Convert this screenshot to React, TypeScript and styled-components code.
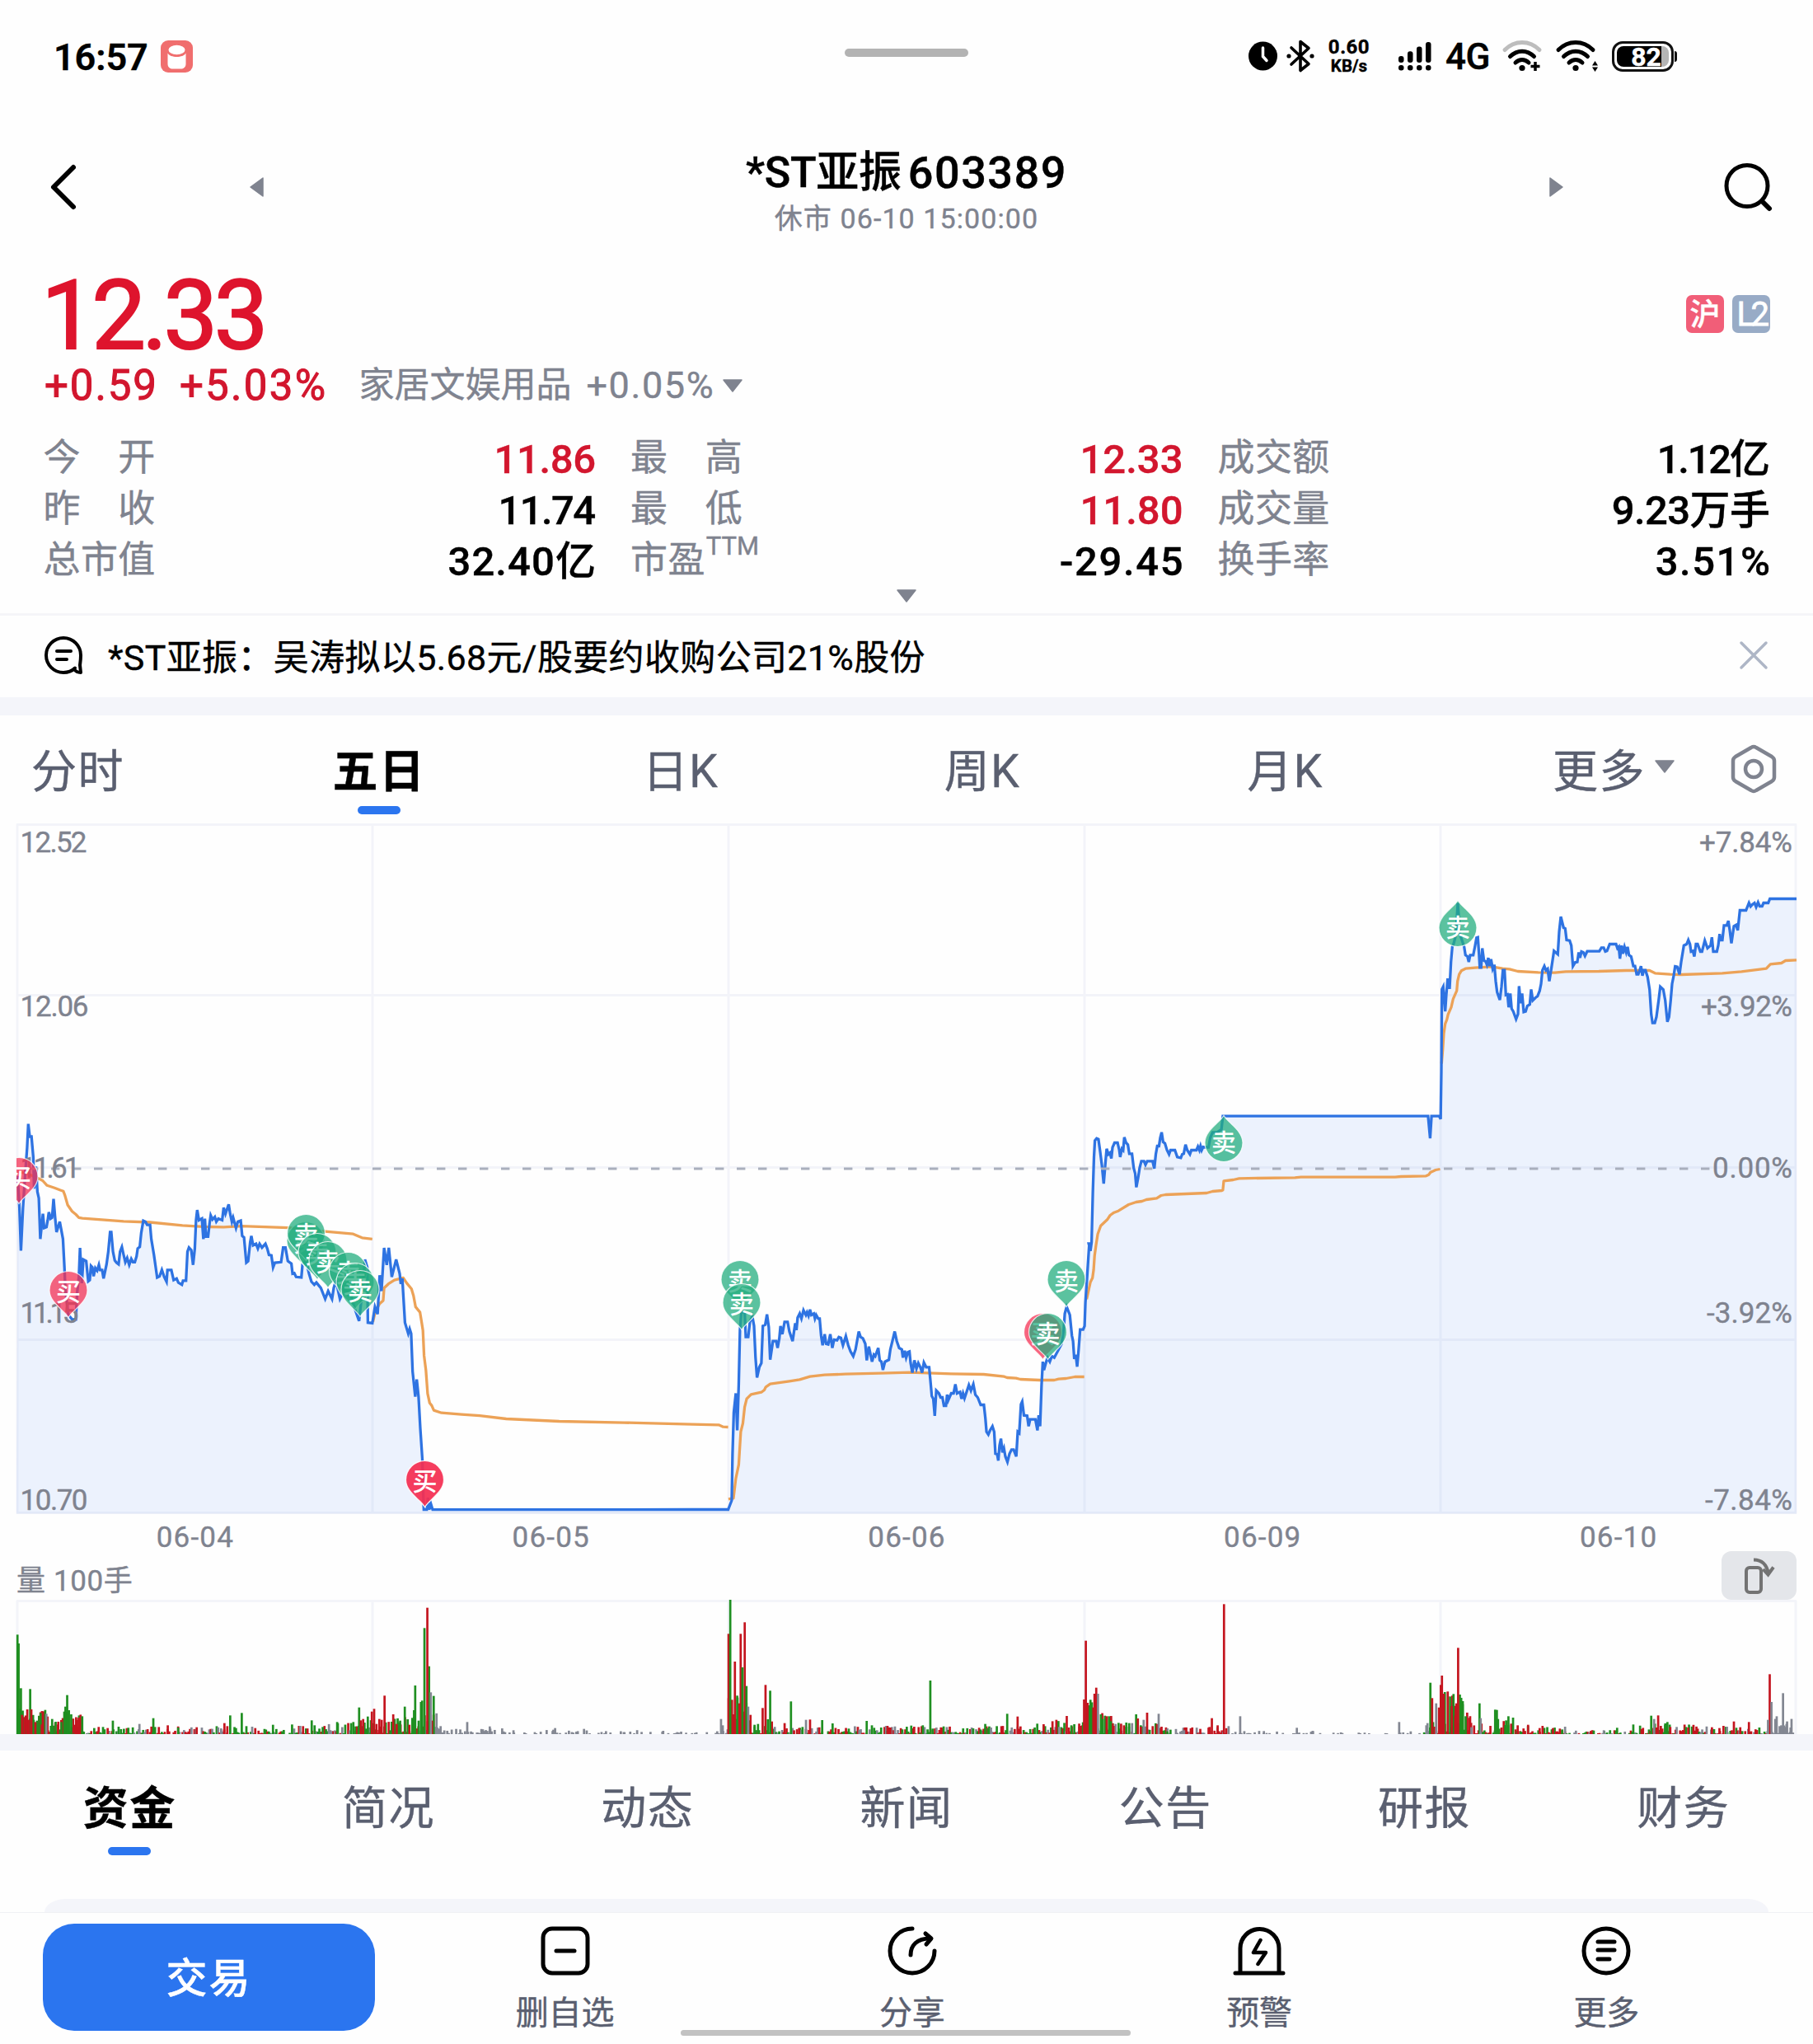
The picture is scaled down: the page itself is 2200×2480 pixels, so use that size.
import React from 'react';
import styled, { createGlobalStyle } from 'styled-components';

const RED = '#d2162e';
const GRAY = '#7f838f';
const SLATE = '#5a5f70';
const BLUE = '#2b75ef';
const BAND = '#f4f5fa';
const FONT = "Roboto, 'Noto Sans CJK SC', sans-serif";

const GlobalStyle = createGlobalStyle`
  html, body { margin: 0; padding: 0; background: #fff; }
  * { box-sizing: border-box; }
  svg { display: block; flex: none; overflow: visible; }
`;

const Page = styled.div`
  width: 2200px;
  height: 2480px;
  display: flex;
  flex-direction: column;
  background: #fefefe;
  color: #000;
  font-family: ${FONT};
  -webkit-text-stroke-width: 0.4px;
  overflow: hidden;
  & > * { flex-shrink: 0; }
`;

const Txt = styled.span<{ $size: number; $color?: string; $weight?: number; $ls?: number; $bolder?: number }>`
  font-size: ${p => p.$size}px;
  color: ${p => p.$color ?? '#000'};
  font-weight: ${p => p.$weight ?? 400};
  letter-spacing: ${p => p.$ls ?? 0}px;
  -webkit-text-stroke-width: ${p => p.$bolder ?? 0.4}px;
  line-height: 1;
  white-space: nowrap;
`;

/* ---------- status bar ---------- */

const StatusBar = styled.header`
  height: 136px;
  display: grid;
  grid-template-columns: 1fr 150px 1fr;
  align-items: center;
`;
const StatusLeft = styled.div`
  display: flex;
  align-items: center;
  gap: 15px;
  padding-left: 65px;
`;
const Clock = styled(Txt)`
  padding-top: 2px;
`;
const Handle = styled.div`
  height: 10px;
  border-radius: 5px;
  background: #b3b3b3;
  align-self: start;
  margin-top: 59px;
`;
const StatusRight = styled.div`
  display: flex;
  align-items: center;
  padding-left: 340px;
`;
const Speed = styled.div`
  width: 54px;
  margin: 0 32px 0 15px;
  display: flex;
  flex-direction: column;
  align-items: center;
  gap: 1px;
`;
const Network = styled.div`
  width: 56px;
  margin: 0 13px 0 16px;
  padding-top: 2px;
`;
const Battery = styled.div`
  position: relative;
  width: 75px;
  height: 37px;
  margin-left: 17px;
  padding: 3px;
  border: 3px solid #111;
  border-radius: 13px;
  &::after {
    content: '';
    position: absolute;
    right: -7px;
    top: 9px;
    width: 3px;
    height: 13px;
    border-radius: 0 3px 3px 0;
    background: #111;
  }
`;
const BatteryLevel = styled.div`
  height: 100%;
  border-radius: 8px;
  display: flex;
  align-items: center;
  justify-content: center;
  padding: 2px 0 0 8px;
  background: linear-gradient(90deg, #000 85%, #b5b5b5 85%);
`;

/* ---------- title ---------- */

const TitleBar = styled.div`
  height: 182px;
  padding: 0 50px 0 60px;
  display: flex;
  align-items: center;
`;
const TitleCenter = styled.div`
  flex: 1;
  display: flex;
  flex-direction: column;
  align-items: center;
  gap: 11px;
  padding-top: 11px;
`;
const TitleLine = styled.div`
  display: flex;
  gap: 8px;
  align-items: center;
`;
const TitleSide = styled.div<{ $between: number }>`
  display: flex;
  align-items: center;
  gap: ${p => p.$between}px;
`;

/* ---------- quote ---------- */

const Quote = styled.section`
  height: 426px;
  display: flex;
  flex-direction: column;
  padding: 0 52px 0 54px;
`;
const PriceRow = styled.div`
  height: 126px;
  display: flex;
  align-items: center;
  justify-content: space-between;
`;
const Price = styled(Txt)`
  padding-top: 5px;
  margin-left: -4px;
`;
const Badges = styled.div`
  display: flex;
  gap: 10px;
`;
const Badge = styled.div<{ $bg: string }>`
  width: 46px;
  height: 46px;
  border-radius: 7px;
  display: flex;
  align-items: center;
  justify-content: center;
  padding-top: 2px;
  background: ${p => p.$bg};
`;
const ChangeRow = styled.div`
  height: 47px;
  display: flex;
  align-items: center;
`;
const Gap = styled.span<{ $w: number }>`
  width: ${p => p.$w}px;
  flex: none;
`;
const StatGrid = styled.div`
  margin: 34px 0 0 -1.5px;
  display: grid;
  grid-template-columns: repeat(3, 1fr);
  grid-auto-rows: 62px;
  column-gap: 42px;
`;
const Stat = styled.div`
  display: flex;
  align-items: center;
  justify-content: space-between;
`;
const Label = styled.span`
  font-size: 45px;
  line-height: 58px;
  letter-spacing: 0.4px;
  color: ${GRAY};
  white-space: nowrap;
`;
const Sup = styled.sup`
  font-size: 31px;
  line-height: 0;
  vertical-align: 22px;
  letter-spacing: 0;
  margin-left: 1px;
`;
const Value = styled.span<{ $up?: boolean; $ls?: number }>`
  font-size: 49px;
  line-height: 58px;
  padding-top: 3px;
  font-weight: 500;
  letter-spacing: ${p => p.$ls ?? 0}px;
  margin-right: ${p => -(p.$ls ?? 0)}px;
  color: ${p => (p.$up ? RED : '#000')};
  white-space: nowrap;
`;
const Expand = styled.div`
  flex: 1;
  display: flex;
  justify-content: center;
  padding: 4px 2px 0 0;
`;

/* ---------- news ---------- */

const News = styled.section`
  height: 102px;
  border-top: 3px solid #f5f5f8;
  padding: 0 54px 3px;
  display: flex;
  align-items: center;
`;
const NewsText = styled.span`
  flex: 1;
  margin-left: 31px;
  padding-top: 7px;
  font-size: 43px;
  line-height: 1;
  letter-spacing: 0.35px;
`;
const Band = styled.div<{ $h: number }>`
  height: ${p => p.$h}px;
  flex: none;
  background: ${BAND};
`;

/* ---------- period tabs ---------- */

const PeriodTabs = styled.nav`
  height: 130px;
  display: grid;
  grid-template-columns: 277px repeat(4, 366px) 1fr;
`;
const Tab = styled.div<{ $pad?: number; $left?: boolean }>`
  display: flex;
  flex-direction: column;
  align-items: ${p => (p.$left ? 'flex-start' : 'center')};
  padding-top: 38px;
  padding-left: ${p => p.$pad ?? 0}px;
`;
const MoreTab = styled.div`
  display: flex;
  align-items: flex-start;
  padding: 35px 0 0 143px;
  & > span:first-child { padding-top: 3px; }
`;
const MoreArrow = styled.div`
  margin: 19px 68px 0 11px;
`;
const TabText = styled.span<{ $on?: boolean }>`
  font-size: 55px;
  line-height: 60px;
  letter-spacing: 1.5px;
  font-weight: ${p => (p.$on ? 700 : 400)};
  color: ${p => (p.$on ? '#000' : SLATE)};
`;
const Underline = styled.i<{ $top: number }>`
  width: 52px;
  height: 10px;
  border-radius: 5px;
  margin-top: ${p => p.$top}px;
  background: ${BLUE};
`;

/* ---------- charts ---------- */

const Dates = styled.div`
  height: 56px;
  padding: 0 20px 1px 21px;
  display: grid;
  grid-template-columns: repeat(5, 1fr);
  justify-items: center;
  align-items: center;
`;
const VolumeHead = styled.div`
  height: 47px;
  padding: 0 20px;
  display: flex;
  justify-content: space-between;
  align-items: flex-end;
`;
const VolumeLabel = styled(Txt)`
  padding-bottom: 5px;
`;
const RotateButton = styled.div`
  width: 91px;
  height: 59px;
  border-radius: 12px;
  background: #e4e6ea;
  display: flex;
  align-items: center;
  justify-content: center;
`;

/* ---------- info tabs and footer ---------- */

const InfoTabs = styled.nav`
  height: 180px;
  display: grid;
  grid-template-columns: repeat(7, 1fr);
`;
const InfoTab = styled.div`
  display: flex;
  flex-direction: column;
  align-items: center;
  padding-top: 40px;
`;
const CardTop = styled.div`
  height: 16px;
  margin: 0 54px;
  border-radius: 26px 26px 0 0 / 16px 16px 0 0;
  background: ${BAND};
`;
const Footer = styled.footer`
  position: relative;
  height: 160px;
  border-top: 1px solid #f0f1f4;
  padding: 13px 40px 0 52px;
  display: flex;
`;
const TradeButton = styled.button`
  width: 403px;
  height: 130px;
  margin-right: 20px;
  padding: 4px 0 0;
  border: 0;
  border-radius: 38px;
  background: ${BLUE};
  color: #fff;
  font: 500 50px/126px ${FONT};
  letter-spacing: 2px;
`;
const Action = styled.div`
  flex: 1;
  display: flex;
  flex-direction: column;
  align-items: center;
  gap: 26px;
  padding-top: 3px;
`;
const HomeBar = styled.div`
  position: absolute;
  left: 826px;
  bottom: 10px;
  width: 546px;
  height: 7px;
  border-radius: 4px;
  background: #c2c2c2;
`;

/* ---------- icons ---------- */

const Tri = ({ dir, w = 24, h = 16 }: { dir: 'left' | 'right' | 'down'; w?: number; h?: number }) => {
  const pts =
    dir === 'down' ? `1,1 ${w - 1},1 ${w / 2},${h - 1}` :
    dir === 'left' ? `${w - 1},1 ${w - 1},${h - 1} 1,${h / 2}` : `1,1 1,${h - 1} ${w - 1},${h / 2}`;
  return (
    <svg width={w} height={h}>
      <polygon points={pts} fill={GRAY} stroke={GRAY} strokeWidth="1.5" strokeLinejoin="round" />
    </svg>
  );
};

const AppIcon = () => (
  <svg width="39" height="39" viewBox="0 0 39 39">
    <rect width="39" height="39" rx="9" fill="#f06e6e" />
    <ellipse cx="19.5" cy="11.5" rx="10" ry="5.8" fill="#fff" />
    <path d="M8.5 15.5c3 6 19 6 22 0v13c0 4-3 6-6 6h-10c-3 0-6-2-6-6z" fill="#fff" />
  </svg>
);

const ClockIcon = () => (
  <svg width="35" height="36" viewBox="0 0 35 36">
    <circle cx="17.5" cy="18" r="17.5" fill="#000" />
    <path d="M17.5 8v10.500l4.500 5" fill="none" stroke="#fff" strokeWidth="3.500" strokeLinecap="round" />
  </svg>
);

const BluetoothIcon = () => (
  <svg width="34" height="40" viewBox="0 0 34 40">
    <path d="M6 10l21 19.500-10 8V2.500l10 8L6 30" fill="none" stroke="#000" strokeWidth="3.600" strokeLinejoin="round" strokeLinecap="round" />
    <circle cx="3" cy="20" r="2.600" />
    <circle cx="31" cy="20" r="2.600" />
  </svg>
);

const SignalIcon = () => (
  <svg width="42" height="36" viewBox="0 0 42 36">
    {[0, 1, 2, 3].map(i => (
      <g key={i}>
        <rect x={1 + i * 11} y={18 - i * 5.7} width="6.500" height={8 + i * 5.7} rx="3" />
        <rect x={1 + i * 11} y="29" width="6.500" height="6.500" rx="3" />
      </g>
    ))}
  </svg>
);

const WifiIcon = ({ dim }: { dim?: boolean }) => (
  <svg width="51" height="38" viewBox="0 0 51 38">
    <g fill="none" strokeWidth="5" strokeLinecap="round">
      <path d="M3 11.500C15-.500 33-.500 45 11.500" stroke={dim ? '#bdbdbd' : '#000'} />
      <path d="M9.500 19.500C18 11 30 11 38.500 19.500" stroke="#000" />
      <path d="M16 27c5-4.600 11-4.600 16 0" stroke="#000" />
    </g>
    <circle cx="24" cy="33.500" r="3.600" />
    {dim ? (
      <path d="M40 26v11M34.500 31.500h11" stroke="#000" strokeWidth="3.500" />
    ) : (
      <path d="M47.500 25l3.500 5.500h-7zM47.500 38l3.500-5.500h-7z" />
    )}
  </svg>
);

const BackIcon = () => (
  <svg width="34" height="56" viewBox="0 0 34 56">
    <path d="M29 4L5 28l24 24" fill="none" stroke="#000" strokeWidth="6" strokeLinecap="round" strokeLinejoin="round" />
  </svg>
);

const SearchIcon = () => (
  <svg width="59" height="60" viewBox="0 0 59 60">
    <g fill="none" stroke="#000" strokeWidth="5" strokeLinecap="round">
      <circle cx="29" cy="28.500" r="25" />
      <path d="M47 47l9 9" strokeWidth="6" />
    </g>
  </svg>
);

const NoteIcon = () => (
  <svg width="46" height="46" viewBox="0 0 46 46">
    <g fill="none" stroke="#000" strokeWidth="4" strokeLinecap="round" strokeLinejoin="round">
      <path d="M37 38.500C33.500 42 29 44 23 44A21 21 0 1 1 44 23c0 5-.500 8-1 12l1 9c-3 0-6-1-8-4" />
      <path d="M15 18h17M15 28h12" />
    </g>
  </svg>
);

const CloseIcon = () => (
  <svg width="36" height="36" viewBox="0 0 36 36">
    <path d="M3 3l30 30M33 3L3 33" stroke="#aeb6c6" strokeWidth="3.500" strokeLinecap="round" />
  </svg>
);

const SettingsIcon = () => (
  <svg width="56" height="60" viewBox="0 0 56 60">
    <g fill="none" stroke={GRAY} strokeWidth="4.500" strokeLinejoin="round">
      <path d="M25 4q3-2 6 0l19 11q3 2 3 5v20q0 3-3 5L31 56q-3 2-6 0L6 45q-3-2-3-5V20q0-3 3-5z" />
      <circle cx="28" cy="30" r="10" />
    </g>
  </svg>
);

const RotateIcon = () => (
  <svg width="38" height="44" viewBox="0 0 38 44">
    <g fill="none" stroke="#737373" strokeWidth="4">
      <rect x="3" y="12" width="18" height="30" rx="4" />
      <path d="M12 2.500c10 0 16 6 18 17" />
      <path d="M23.500 14l6 6.500 6.500-9" />
    </g>
  </svg>
);

const RemoveIcon = () => (
  <svg width="60" height="60" viewBox="0 0 60 60">
    <g fill="none" stroke="#000" strokeWidth="5">
      <rect x="3" y="3" width="54" height="54" rx="11" />
      <path d="M19 30h22" strokeLinecap="round" />
    </g>
  </svg>
);

const ShareIcon = () => (
  <svg width="60" height="60" viewBox="0 0 60 60">
    <g fill="none" stroke="#000" strokeWidth="5" strokeLinecap="round" strokeLinejoin="round">
      <path d="M30 3A27 27 0 1 0 57 30" />
      <path d="M28 35c0-12 8-20 23-20" />
      <path d="M46 9l7 6-6 7" />
    </g>
  </svg>
);

const AlertIcon = () => (
  <svg width="64" height="60" viewBox="0 0 64 60">
    <g fill="none" stroke="#000" strokeWidth="5" strokeLinecap="round" strokeLinejoin="round">
      <path d="M9 56V27a23.500 23.500 0 0 1 47 0v29M3 57h58" />
      <path d="M33.500 17L25 32h15l-9.500 14" strokeWidth="4.500" />
    </g>
  </svg>
);

const MenuIcon = () => (
  <svg width="60" height="60" viewBox="0 0 60 60">
    <g fill="none" stroke="#000" strokeWidth="5" strokeLinecap="round">
      <circle cx="30" cy="30" r="27" />
      <path d="M20 19h20M20 29h20M20 40h14" />
    </g>
  </svg>
);

/* ---------- price series ---------- */

type Pt = [number, number];

/* Unpacks "x,y x,y" pairs stored in a segment's own units. */
const unpack = (ox: number, oy: number, sx: number, sy: number, src: string): Pt[] =>
  src.trim().split(/\s+/).map(p => {
    const [x, y] = p.split(',').map(Number);
    return [ox + x / sx, oy + y / sy];
  });

const seg1 = (s: string) => unpack(0, 1300, 2.8, 2.613, s);
const seg2 = (s: string) => unpack(840, 1480, 2.8, 3, s);
const seg3 = (s: string) => unpack(1250, 1320, 2.8, 3, s);
const seg4 = (s: string) => unpack(1700, 1000, 3, 3, s);
const toPath = (pts: Pt[]) => 'M' + pts.map(p => `${p[0].toFixed(1)} ${p[1].toFixed(1)}`).join('L');

const PRICE: Pt[] = [
  ...seg1(`60,330 66,430 71,567 78,430 85,330 92,240 96,165 101,205 107,205 113,270 116,370 122,300 127,380 132,400 137,530 146,450 150,495 158,492 162,470 166,445 172,465 177,462 182,403 187,460 192,508 203,475 208,500 214,530 219,620 222,690 232,770 245,785 258,785 262,700 268,650 272,558 278,670 283,595 293,600 300,664 305,660 309,615 314,620 318,648 324,622 330,630 336,612 340,628 347,628 352,655 362,610 368,570 374,508 378,508 384,570 390,598 396,605 403,610 408,570 414,555 420,580 426,603 432,590 439,612 446,593 452,603 458,603 464,585 468,560 475,555 480,510 487,472 494,475 500,485 510,485 514,530 523,580 534,652 542,648 550,628 558,650 566,665 569,628 582,628 590,660 600,655 606,668 618,675 622,662 632,662 637,570 642,557 650,565 656,612 662,560 666,470 670,438 676,470 686,465 691,530 696,465 700,522 707,522 712,480 716,455 722,468 730,460 735,475 742,465 755,470 760,430 766,450 777,420 782,450 788,475 792,462 802,495 808,475 818,472 823,520 829,525 837,605 843,600 850,540 854,520 860,550 870,545 876,560 882,545 890,557 902,545 908,560 914,580 922,582 928,620 934,605 955,603 962,557 970,557 978,600 990,608 994,640 1000,638 1006,650 1024,652 1028,610 1040,600 1050,640 1058,665 1068,675 1075,668 1090,685 1105,720 1115,695 1128,720 1134,685 1142,660 1148,690 1155,720 1170,690 1190,700 1205,750 1220,790 1228,720 1240,595 1248,620 1250,795 1265,797 1274,745 1283,768 1290,645 1296,695 1305,558 1314,612 1321,558 1331,650 1346,595 1358,640 1362,672 1367,655 1376,795 1387,830 1392,815 1397,830 1402,950 1411,1030 1416,975 1422,1030 1428,1130 1435,1228 1438,1340 1440,1388 1450,1388 1454,1350 1458,1388 1464,1370 1470,1388 1474,1388`),
  ...seg2(`0,1053 122,1053 134,1020 137,850 141,700 148,630 153,765 158,600 162,400 167,335 178,335 182,425 190,425 196,370 204,350 210,385 215,500 220,573 228,535 235,520 240,385 248,380 254,343 260,390 265,508 274,440 285,440 290,465 296,430 300,385 306,415 314,370 324,370 330,405 341,440 350,375 354,400 358,355 365,340 371,358 378,328 386,345 390,335 395,348 400,325 405,345 413,340 417,358 421,345 428,358 433,358 438,420 443,455 450,415 455,450 462,452 469,415 476,465 482,435 492,437 498,425 505,428 512,455 522,422 530,455 538,478 547,495 555,470 566,405 572,425 580,430 588,450 593,510 600,460 611,515 617,490 622,495 632,465 637,510 643,515 648,545 655,515 668,508 673,470 680,440 688,405 695,440 703,465 712,470 716,500 722,475 727,500 733,480 738,478 742,520 748,555 755,510 762,540 768,520 775,535 781,555 787,518 795,535 805,535 809,580 814,640 819,650 824,712 829,620 838,630 844,645 850,645 855,675 862,675 866,635 870,655 880,630 888,630 894,597 900,630 910,625 915,650 920,630 925,648 940,600 947,620 955,597 962,635 970,645 980,672 991,672 996,720 1000,770 1006,780 1012,765 1020,750 1026,770 1030,850 1036,852 1040,875 1044,820 1049,795 1054,845 1059,830 1064,860 1071,880 1078,850 1085,835 1092,835 1101,860 1106,770 1111,775 1117,670 1121,660 1127,710 1138,712 1143,750 1148,725 1166,725 1173,765 1177,710 1182,750 1187,600 1191,515 1195,545 1200,525 1207,500 1215,515 1222,495 1230,500 1240,480 1255,450 1262,400 1266,340 1272,315 1283,345 1290,420 1294,440 1298,505 1303,490 1308,533 1313,470 1318,398 1328,398 1333,385 1336,300 1342,200 1349,85`),
  ...seg3(`199,565 205,592 209,560 213,380 217,250 220,190 226,182 232,185 238,230 244,280 250,347 256,270 260,220 266,240 271,235 276,255 280,215 287,198 297,198 303,225 306,250 312,220 316,225 320,178 326,198 332,205 337,238 346,238 352,290 357,310 361,360 367,325 372,290 378,265 387,265 392,278 398,265 416,265 422,292 427,240 432,210 438,210 442,180 447,160 452,195 458,200 465,225 472,240 477,225 492,225 500,250 512,253 517,240 522,238 528,205 534,225 543,240 548,225 565,225 570,212 575,225 579,210 583,225 588,213 598,215 606,215 612,180 620,160 635,160 650,150 655,101 1352,101 1359,182 1364,101 1390,101 1395,112`),
  ...seg4(`145,1040 147,900 149,600 154,590 161,680 165,620 170,560 177,598 182,500 187,445 193,430 200,400 207,285 215,400 230,445 235,475 242,480 247,500 252,475 263,475 270,440 275,412 280,410 284,470 287,520 292,520 296,450 302,495 308,498 313,510 318,485 323,515 328,490 334,525 340,510 345,570 350,610 360,638 366,590 371,530 377,530 382,620 388,618 392,665 398,615 403,670 409,680 419,708 426,690 430,588 436,650 441,615 447,682 454,680 460,660 469,655 474,600 480,640 490,630 497,625 505,605 510,580 515,530 522,515 528,530 534,525 540,570 548,520 557,460 571,472 576,390 582,335 592,375 598,378 603,420 614,422 620,440 626,515 634,502 642,500 647,465 652,485 657,462 664,465 670,478 678,461 722,461 730,448 738,448 744,462 750,460 760,435 783,435 788,450 793,445 797,488 803,440 808,470 814,445 820,465 825,445 830,475 838,480 846,515 852,515 858,545 864,545 874,515 879,550 884,530 890,530 898,555 905,600 911,690 916,722 924,722 930,700 938,640 944,590 955,600 962,640 966,680 970,718 976,700 982,640 987,580 993,550 998,516 1006,518 1014,545 1020,500 1030,440 1040,435 1046,420 1052,435 1056,462 1063,460 1068,480 1074,435 1080,435 1090,462 1096,462 1106,422 1116,450 1127,440 1132,410 1137,462 1150,462 1155,440 1160,398 1164,420 1170,420 1176,367 1186,367 1192,350 1197,385 1203,432 1212,370 1220,365 1226,385 1234,312 1256,312 1267,285 1273,298 1280,290 1287,285 1293,300 1300,283 1306,297 1315,297 1320,285 1337,285 1343,270 1440,270`),
];

const AVERAGES: Pt[][] = [
  seg1('60,315 100,325 135,340 145,345 160,360 185,368 205,375 215,378 220,390 230,422 245,442 258,452 268,462 280,464 420,474 510,477 620,487 690,491 760,492 820,489 980,494 1105,506 1200,514 1215,520 1230,526 1265,530'),
  [
    ...seg1('1267,793 1275,760 1290,735 1302,725 1305,685 1320,672 1340,660 1370,653 1382,670 1398,688 1405,710 1412,745 1427,762 1432,790 1437,820 1441,900 1447,945 1453,1020 1460,1050 1467,1058 1474,1073 1500,1081 1568,1086 1630,1090 1720,1100 1900,1108 2120,1112'),
    ...seg2('0,743 90,745 105,752 122,753'),
  ],
  seg2('123,1015 140,1012 148,940 158,890 165,770 172,740 178,680 185,650 200,634 235,626 245,618 250,607 265,596 330,586 365,580 400,569 450,563 520,560 640,557 740,554 800,556 880,559 990,561 1060,569 1070,573 1100,575 1115,579 1180,582 1230,582 1245,578 1270,576 1300,570 1332,570'),
  seg3('192,768 205,705 212,690 216,660 219,610 224,570 230,530 240,500 262,478 272,462 285,452 300,446 335,423 360,414 380,411 395,405 430,400 445,390 460,387 600,381 620,375 652,372 655,370 658,337 690,333 710,328 900,325 920,323 1240,323 1260,321 1345,319 1355,314 1360,306 1378,297 1393,294'),
  seg4('148,870 152,820 156,760 161,725 167,710 172,690 183,665 190,635 203,605 206,570 212,545 220,532 235,524 270,521 330,517 370,524 395,526 425,534 500,538 560,539 600,535 720,534 820,531 905,531 925,541 980,545 1020,546 1170,541 1240,535 1330,524 1345,508 1385,504 1400,495 1440,493'),
];

type PinKind = 'buy' | 'sell';
interface PinData { x: number; top: number; kind: PinKind; flip?: boolean }

const PINS: PinData[] = [
  { x: 23, top: 1404, kind: 'buy' },
  { x: 83, top: 1542, kind: 'buy' },
  { x: 371, top: 1482, kind: 'sell' },
  { x: 371.5, top: 1473, kind: 'sell' },
  { x: 385, top: 1496, kind: 'sell' },
  { x: 398, top: 1506, kind: 'sell' },
  { x: 422.5, top: 1519, kind: 'sell' },
  { x: 431, top: 1532, kind: 'sell' },
  { x: 437, top: 1541, kind: 'sell' },
  { x: 515.5, top: 1772, kind: 'buy' },
  { x: 515.5, top: 1772, kind: 'buy' },
  { x: 898, top: 1529, kind: 'sell' },
  { x: 900, top: 1557, kind: 'sell' },
  { x: 1265.5, top: 1593, kind: 'buy' },
  { x: 1271.500, top: 1593, kind: 'sell' },
  { x: 1294, top: 1529, kind: 'sell' },
  { x: 1485, top: 1353, kind: 'sell', flip: true },
  { x: 1769, top: 1092, kind: 'sell', flip: true },
];

const Pin = ({ x, top, kind, flip }: PinData) => {
  const d = flip
    ? 'M0 0C5 9 23 18 23 33A23 23 0 0 1-23 33C-23 18-5 9 0 0z'
    : 'M0 56C5 47 23 38 23 23A23 23 0 0 0-23 23C-23 38-5 47 0 56z';
  return (
    <g transform={`translate(${x} ${top})`}>
      <path d={d} fill={kind === 'buy' ? '#f42f52' : '#22ad7e'} fillOpacity="0.74" stroke="#fff" strokeOpacity="0.8" strokeWidth="1.2" />
      <text x="0" y={flip ? 43 : 35} textAnchor="middle" fontFamily="'Noto Sans CJK SC', sans-serif" fontWeight="500" fontSize="30" fill="#fff">
        {kind === 'buy' ? '买' : '卖'}
      </text>
    </g>
  );
};

const AXIS: [string, string, number, number, number][] = [
  ['12.52', '+7.84%', 1033.5, 81, 113],
  ['12.06', '+3.92%', 1232, 83, 111],
  ['11.61', '0.00%', 1428.5, 73, 97],
  ['11.15', '-3.92%', 1604.5, 71, 104],
  ['10.70', '-7.84%', 1831.5, 82, 106],
];

const COLS = [21, 452, 884, 1316, 1748, 2179];

const PriceChart = () => (
  <svg width="2200" height="840" viewBox="0 997.5 2200 840">
    <defs>
      <clipPath id="plot"><rect x="20" y="998" width="2160" height="840" /></clipPath>
    </defs>
    <g stroke="#f3f4f9" strokeWidth="3">
      {COLS.map(x => <path key={x} d={`M${x} 1000V1836`} />)}
      {[1000, 1207, 1416, 1625, 1835].map(y => <path key={y} d={`M20 ${y}H2180`} />)}
    </g>
    <path d={`${toPath(PRICE)}L2180 1836L20 1836z`} fill={BLUE} fillOpacity="0.085" />
    <g fill="none" clipPath="url(#plot)">
      {AVERAGES.map((a, i) => <path key={i} d={toPath(a)} stroke="#eca257" strokeWidth="3.3" strokeLinejoin="round" />)}
      <path d={toPath(PRICE)} stroke="#2e73e2" strokeWidth="3.3" />
      <path d="M36 1417.500H2076" stroke="#a9afbd" strokeWidth="2.800" strokeDasharray="10.4 15.6" />
    </g>
    <g fill={GRAY} stroke={GRAY} strokeWidth="0.4" fontFamily={FONT} fontSize="35">
      {AXIS.map(([l, r, y, lw, rw]) => (
        <g key={l}>
          <text x="24.5" y={y} textLength={lw}>{l}</text>
          <text x={2175 - rw} y={y} textLength={rw}>{r}</text>
        </g>
      ))}
    </g>
    <g clipPath="url(#plot)">
      {PINS.map((p, i) => <Pin key={i} {...p} />)}
    </g>
  </svg>
);

/* ---------- volume ---------- */

const BAR = { g: '#1f8f21', r: '#c4151f', n: '#838792' };
type BarColor = keyof typeof BAR;
interface Bar { x: number; h: number; c: BarColor }

const bars = (ox: number, c: BarColor, src: string): Bar[] =>
  src.trim().split(/\s+/).map(p => {
    const [x, y] = p.split(',').map(Number);
    return { x: ox + x / 1.4255, h: (852 - y) / 3, c };
  });

const PEAKS: Bar[] = [
  ...bars(0, 'g', '30,490 32,522 36,685 34,760 52,688 70,775 78,764 116,710 113,752 111,770 119,765 123,780 58,800 64,803 90,797 96,807 106,808 142,787 178,826 195,803 205,825 265,794 268,826 308,828 398,784 408,830 418,775 426,823 472,818 505,817 539,802 544,820 558,826 583,808 611,808 621,755 636,788 700,752 718,675 716,765 713,793 692,803 705,798 724,803 730,730 734,466 742,605 750,713 728,735'),
  ...bars(0, 'r', '38,782 42,790 47,762 50,800 54,762 61,808 82,788 72,817 100,817 133,800 136,792 130,818 186,830 290,820 340,827 388,812 393,823 517,822 524,823 643,770 647,760 665,712 628,797 624,802 656,797 660,800 651,815 680,780 686,815 708,818 739,392 747,803'),
  ...bars(0, 'n', '80,778 241,815 436,825 519,822 745,700 756,828 762,823 759,832 808,808 847,824 888,838 960,830 957,836 1010,833 1090,843 1080,845 1147,840 1178,843 796,835 1247,797 1250,820'),
  ...bars(0, 'r', '1260,487 1266,727 1271,588 1281,487 1288,445 1286,770 1298,782 1319,757 1324,673 1335,806 1357,812 1382,830 1401,799 1535,822 1540,828 1269,780 1278,740'),
  ...bars(0, 'g', '1263,363 1275,712 1284,609 1291,677 1305,818 1311,815 1328,798 1332,694 1368,733 1388,826 1422,801 1440,813 1468,832 1499,804 1508,820 1524,828'),
  ...bars(0, 'n', '1294,752 1394,800'),
  ...bars(1100, 'g', '8,821 28,820 41,657 45,832 64,824 136,815 143,824 156,823 174,778 128,835 226,814 285,820 290,816 318,727 336,780 339,797 343,785 350,787 353,805 380,810 385,812 397,780 446,838 451,842 906,665 931,699 940,715 946,706 957,708 962,732 967,787 991,740 1018,763 1021,764 1023,797 1037,802 1041,787 1049,792 1134,835 1229,829 1257,817 1288,785 1316,808 1312,818 1475,828'),
  ...bars(1100, 'r', '192,788 197,824 237,816 259,800 277,786 299,825 307,726 310,512 313,738 323,755 328,683 325,705 346,787 358,822 371,814 376,820 400,795 405,825 416,774 433,815 441,825 508,833 524,826 528,794 538,820 549,379 909,721 924,673 926,639 929,705 936,697 943,750 949,785 954,538 951,740 973,793 1029,828 1057,820 1075,818 1100,822 1095,830 1118,830 1130,832 1300,784 1297,828 1321,826 1352,828 1393,827 1406,830 1413,822 1431,806 1442,827 1457,808 1493,634'),
  ...bars(1100, 'n', '146,828 264,826 331,705 390,812 410,800 436,778 480,838 557,823 577,787 618,841 675,829 703,841 852,808 872,842 899,820 901,812 916,740 977,827 993,794 1139,825 1206,838 1293,797 1332,826 1419,825 1490,800 1496,735 1516,703 1522,815 1529,828 1513,820 1519,826'),
];

/* start, end, tallest bar, share of minutes traded, colour mix */
const QUIET: [number, number, number, number, string][] = [
  [22, 98, 30, 1, 'ggrr'],
  [98, 180, 8, 0.9, 'ggrn'],
  [180, 310, 9, 0.8, 'grrn'],
  [310, 390, 6, 0.7, 'gnr'],
  [390, 450, 14, 0.9, 'ggrn'],
  [450, 508, 22, 1, 'gr'],
  [508, 530, 28, 1, 'grn'],
  [530, 620, 6, 0.5, 'n'],
  [620, 872, 4, 0.35, 'n'],
  [872, 884, 8, 0.7, 'n'],
  [884, 912, 46, 1, 'rrg'],
  [912, 940, 16, 1, 'gr'],
  [940, 1170, 9, 0.9, 'grgrn'],
  [1170, 1250, 9, 0.9, 'grn'],
  [1250, 1314, 15, 0.95, 'rrgn'],
  [1314, 1350, 38, 1, 'rrg'],
  [1350, 1425, 13, 0.9, 'grn'],
  [1425, 1490, 8, 0.7, 'rn'],
  [1490, 1600, 3, 0.4, 'n'],
  [1600, 1725, 1.2, 0.2, 'n'],
  [1728, 1746, 18, 0.8, 'ngr'],
  [1746, 1785, 46, 1, 'rrg'],
  [1785, 1845, 15, 0.9, 'gr'],
  [1845, 1905, 9, 0.9, 'rrg'],
  [1905, 1990, 4, 0.6, 'gnr'],
  [1990, 2060, 13, 0.85, 'grr'],
  [2060, 2145, 9, 0.8, 'grn'],
  [2145, 2176, 22, 1, 'n'],
];

const makeQuiet = (): Bar[] => {
  let s = 7919;
  const rnd = () => ((s = (s * 16807) % 2147483647) / 2147483647);
  const out: Bar[] = [];
  QUIET.forEach(([a, b, max, share, mix]) => {
    for (let x = a; x < b; x += 1.8) {
      if (rnd() > share) continue;
      out.push({ x, h: 1 + max * Math.pow(rnd(), 1.8), c: mix[Math.floor(rnd() * mix.length)] as BarColor });
    }
  });
  return out;
};

const VOLUME = [...makeQuiet(), ...PEAKS];

const VolumeChart = () => (
  <svg width="2200" height="163" viewBox="0 1941 2200 163">
    <g stroke="#f3f4f9" strokeWidth="3">
      {COLS.map(x => <path key={x} d={`M${x} 1942V2104`} />)}
      <path d="M20 1942.500H2180" />
    </g>
    {VOLUME.map((b, i) => (
      <rect key={i} x={b.x - 1.2} y={2104 - b.h} width="2.700" height={b.h} fill={BAR[b.c]} />
    ))}
  </svg>
);

/* ---------- content ---------- */

interface StatData { label: React.ReactNode; value: string; up?: boolean; ls?: number }

const STATS: StatData[] = [
  { label: '今　开', value: '11.86', up: true, ls: -0.4 },
  { label: '最　高', value: '12.33', up: true },
  { label: '成交额', value: '1.12亿', ls: -2.2 },
  { label: '昨　收', value: '11.74', ls: -1.6 },
  { label: '最　低', value: '11.80', up: true },
  { label: '成交量', value: '9.23万手', ls: -0.6 },
  { label: '总市值', value: '32.40亿', ls: 1.1 },
  { label: <>市盈<Sup>TTM</Sup></>, value: '-29.45', ls: 1.6 },
  { label: '换手率', value: '3.51%', ls: 1.5 },
];

const ACTIONS: [string, React.ReactNode][] = [
  ['删自选', <RemoveIcon />],
  ['分享', <ShareIcon />],
  ['预警', <AlertIcon />],
  ['更多', <MenuIcon />],
];

export default function App() {
  return (
    <>
      <GlobalStyle />
      <Page>
        <StatusBar>
          <StatusLeft>
            <Clock $size={45} $weight={600} $ls={-0.1}>16:57</Clock>
            <AppIcon />
          </StatusLeft>
          <Handle />
          <StatusRight>
            <ClockIcon />
            <Gap $w={11} />
            <BluetoothIcon />
            <Speed>
              <Txt $size={24} $weight={700} $ls={0.5}>0.60</Txt>
              <Txt $size={20.5} $weight={700}>KB/s</Txt>
            </Speed>
            <SignalIcon />
            <Network><Txt $size={44} $weight={500} $ls={-0.5}>4G</Txt></Network>
            <WifiIcon dim />
            <Gap $w={14} />
            <WifiIcon />
            <Battery><BatteryLevel><Txt $size={32} $weight={700} $color="#fff">82</Txt></BatteryLevel></Battery>
          </StatusRight>
        </StatusBar>

        <TitleBar>
          <TitleSide $between={209}><BackIcon /><Tri dir="left" w={17} h={24} /></TitleSide>
          <TitleCenter>
            <TitleLine>
              <Txt $size={52} $weight={500} $ls={-0.3}>*ST亚振</Txt>
              <Txt $size={54} $weight={500} $ls={1.5}>603389</Txt>
            </TitleLine>
            <Txt $size={34} $color={GRAY} $ls={1.1}>休市 06-10 15:00:00</Txt>
          </TitleCenter>
          <TitleSide $between={194}><Tri dir="right" w={17} h={24} /><SearchIcon /></TitleSide>
        </TitleBar>

        <Quote>
          <PriceRow>
            <Price $size={117} $bolder={2} $color="#de142d" $ls={-4.6}>12.33</Price>
            <Badges>
              <Badge $bg="#f15e78"><Txt $size={37} $color="#fff" $weight={500}>沪</Txt></Badge>
              <Badge $bg="#98abc6"><Txt $size={40} $color="#fff" $bolder={0.8} $ls={-4.5}>L2</Txt></Badge>
            </Badges>
          </PriceRow>
          <ChangeRow>
            <Txt $size={51} $color={RED} $bolder={1} $ls={1.9}>+0.59</Txt>
            <Gap $w={26} />
            <Txt $size={51} $color={RED} $bolder={1} $ls={2.3}>+5.03%</Txt>
            <Gap $w={38} />
            <Txt $size={43} $color={GRAY}>家居文娱用品</Txt>
            <Gap $w={18} />
            <Txt $size={45} $color={GRAY} $ls={1.6}>+0.05%</Txt>
            <Gap $w={10} />
            <Tri dir="down" />
          </ChangeRow>
          <StatGrid>
            {STATS.map(({ label, value, up, ls }) => (
              <Stat key={value}><Label>{label}</Label><Value $up={up} $ls={ls}>{value}</Value></Stat>
            ))}
          </StatGrid>
          <Expand><Tri dir="down" /></Expand>
        </Quote>

        <News>
          <NoteIcon />
          <NewsText>*ST亚振：吴涛拟以5.68元/股要约收购公司21%股份</NewsText>
          <CloseIcon />
        </News>
        <Band $h={22} />

        <PeriodTabs>
          <Tab $left $pad={38}><TabText>分时</TabText></Tab>
          <Tab><TabText $on>五日</TabText><Underline $top={12} /></Tab>
          <Tab><TabText>日K</TabText></Tab>
          <Tab><TabText>周K</TabText></Tab>
          <Tab $pad={3}><TabText>月K</TabText></Tab>
          <MoreTab>
            <TabText>更多</TabText>
            <MoreArrow><Tri dir="down" /></MoreArrow>
            <SettingsIcon />
          </MoreTab>
        </PeriodTabs>

        <PriceChart />
        <Dates>
          {['06-04', '06-05', '06-06', '06-09', '06-10'].map(d => (
            <Txt key={d} $size={35} $color={GRAY} $ls={1.2}>{d}</Txt>
          ))}
        </Dates>
        <VolumeHead>
          <VolumeLabel $size={35} $color={GRAY} $ls={0.6}>量 100手</VolumeLabel>
          <RotateButton><RotateIcon /></RotateButton>
        </VolumeHead>
        <VolumeChart />
        <Band $h={20} />

        <InfoTabs>
          {['资金', '简况', '动态', '新闻', '公告', '研报', '财务'].map((t, i) => (
            <InfoTab key={t}>
              <TabText $on={i === 0}>{t}</TabText>
              {i === 0 && <Underline $top={17} />}
            </InfoTab>
          ))}
        </InfoTabs>
        <CardTop />

        <Footer>
          <TradeButton>交易</TradeButton>
          {ACTIONS.map(([t, icon]) => (
            <Action key={t}>{icon}<Txt $size={40} $color={SLATE}>{t}</Txt></Action>
          ))}
          <HomeBar />
        </Footer>
      </Page>
    </>
  );
}
